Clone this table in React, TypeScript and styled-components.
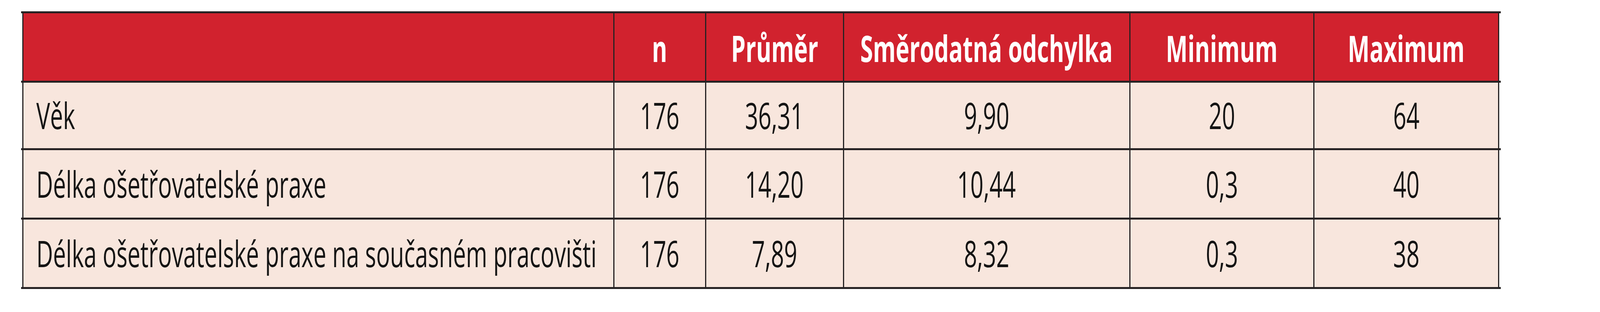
import React from "react";
import styled, { createGlobalStyle } from "styled-components";

/* The reference frame is 6141 x 800. The browser gives a 4096 x 800 viewport,
   so horizontal measures are taken as a share of the viewport width while
   vertical measures stay in reference pixels. Glyphs are narrowed by the same
   horizontal factor so the text keeps its place in the cells. */
const REF_W = 6141;
const SX = 4096 / REF_W;
const u = (n: number) => `calc(${n} * 100vw / ${REF_W})`;

const GlobalStyle = createGlobalStyle`
  html, body { margin: 0; padding: 0; background: #ffffff; overflow: hidden; }
  body {
    font-family: "Open Sans", "Liberation Sans", sans-serif;
  }
`;

const LINE = "#262223";

const Page = styled.div`
  padding: 29px 0 0 ${u(81)};
`;

const Table = styled.div`
  display: inline-flex;
  flex-direction: column;
  border-bottom: 5px solid ${LINE};
`;

const Row = styled.div<{ $h: number }>`
  display: grid;
  grid-template-columns: ${u(2268)} ${u(352)} ${u(529)} ${u(1099)} ${u(707)} ${u(714)};
  padding: 0 ${u(6)} 0 ${u(5)};
  border-top: 5px solid ${LINE};
  height: ${(p) => p.$h}px;
`;

const Cell = styled.div<{ $head?: boolean; $left?: boolean; $last?: boolean }>`
  box-sizing: border-box;
  display: flex;
  align-items: center;
  justify-content: ${(p) => (p.$left ? "flex-start" : "center")};
  border-left: ${u(5)} solid ${LINE};
  border-right: ${(p) => (p.$last ? `${u(5)} solid ${LINE}` : "none")};
  background: ${(p) => (p.$head ? "#d1222e" : "#f8e6dd")};
  color: ${(p) => (p.$head ? "#ffffff" : "#141414")};
  font-size: 93px;
  font-weight: ${(p) => (p.$head ? 700 : 400)};
  font-stretch: 95%;
  white-space: nowrap;
  padding: ${(p) => (p.$head ? "7px 0 0 0" : p.$left ? `0 0 0 ${u(49)}` : "0")};
  line-height: 1.2;
`;

const Text = styled.span<{ $left?: boolean; $bold?: boolean }>`
  display: inline-block;
  flex: none;
  transform: scaleX(${(p) => SX * (p.$bold ? 0.955 : 0.95)});
  transform-origin: ${(p) => (p.$left ? "left center" : "center center")};
`;

const head = ["", "n", "Průměr", "Směrodatná odchylka", "Minimum", "Maximum"];
const rows: { label: string; values: string[]; h: number }[] = [
  { label: "Věk", values: ["176", "36,31", "9,90", "20", "64"], h: 168 },
  { label: "Délka ošetřovatelské praxe", values: ["176", "14,20", "10,44", "0,3", "40"], h: 173 },
  {
    label: "Délka ošetřovatelské praxe na současném pracovišti",
    values: ["176", "7,89", "8,32", "0,3", "38"],
    h: 173,
  },
];

export default function App() {
  return (
    <>
      <GlobalStyle />
      <Page>
        <Table>
          <Row $h={173}>
            {head.map((h, i) => (
              <Cell key={i} $head $last={i === head.length - 1}>
                {h && <Text $bold>{h}</Text>}
              </Cell>
            ))}
          </Row>
          {rows.map((r) => (
            <Row key={r.label} $h={r.h}>
              <Cell $left>
                <Text $left>{r.label}</Text>
              </Cell>
              {r.values.map((v, i) => (
                <Cell key={i} $last={i === r.values.length - 1}>
                  <Text>{v}</Text>
                </Cell>
              ))}
            </Row>
          ))}
        </Table>
      </Page>
    </>
  );
}
